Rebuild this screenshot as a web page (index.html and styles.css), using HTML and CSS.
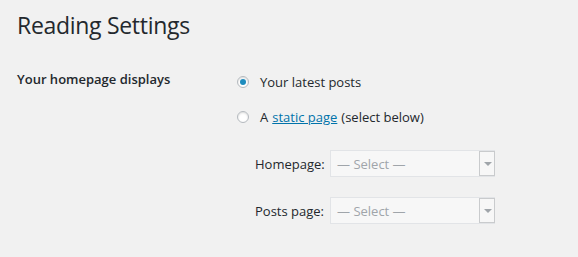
FILE: index.html
```html
<!DOCTYPE html>
<html>
	<head>
		<meta charset="UTF-8">
		<title>Reading Settings</title>
		<link rel="stylesheet" href="styles.css">
	</head>
	<body>
		<div id="wrap">
			<h1>Reading Settings</h1>
			<div class="row">
				<div class="label">Your homepage displays</div>
				<div class="field">
					<label class="opt"><span class="radio checked"></span>Your latest posts</label>
					<label class="opt"><span class="radio"></span>A <a href="#">static page</a> (select below)</label>
					<ul class="pages">
						<li><span class="name">Homepage:</span><span class="select">— Select —<i class="arrow"></i></span></li>
						<li><span class="name">Posts page:</span><span class="select">— Select —<i class="arrow"></i></span></li>
					</ul>
				</div>
			</div>
		</div>
	</body>
</html>
```

FILE: styles.css
```css
*{margin: 0;padding: 0;}
li{list-style: none;}
html,body{height:100%;}
body{background:#f1f1f1;color:#23282d;font-family:"Open Sans","Noto Sans",sans-serif;font-size:13px;}
#wrap{padding:10px 0 0 17px;}
h1{font-size:23px;font-weight:400;line-height:30px;letter-spacing:-0.3px;}
.row{display:flex;margin-top:29px;}
.label{width:220px;font-weight:600;line-height:20px;}
.field{padding-top:3px;}
.opt{display:flex;align-items:center;line-height:20px;margin-bottom:15px;}
.opt a{color:#0073aa;margin:0 4px;}
.radio{width:10px;height:10px;border:1px solid #b4b9be;border-radius:50%;background:#fff;box-shadow:inset 0 1px 2px rgba(0,0,0,.15);margin-right:11px;position:relative;}
.radio.checked:before{content:"";position:absolute;left:2px;top:2px;width:6px;height:6px;border-radius:50%;background:#1e8cbe;}
.pages{padding:0 0 0 18px;}
.pages li{display:flex;align-items:center;margin-top:20px;}
.pages li:first-child{margin-top:23px;}
.name{width:75px;}
.select{display:flex;align-items:center;justify-content:space-between;width:157px;height:25px;border:1px solid #e2e4e7;background:#f7f7f7;color:#a0a5aa;padding-left:6px;position:relative;}
.arrow{width:16px;height:25px;border:1px solid #c9cbcd;box-sizing:border-box;margin-right:-1px;position:relative;}
.arrow:after{content:"";position:absolute;left:4px;top:10px;border-left:4px solid transparent;border-right:4px solid transparent;border-top:4px solid #a0a5aa;}
```
